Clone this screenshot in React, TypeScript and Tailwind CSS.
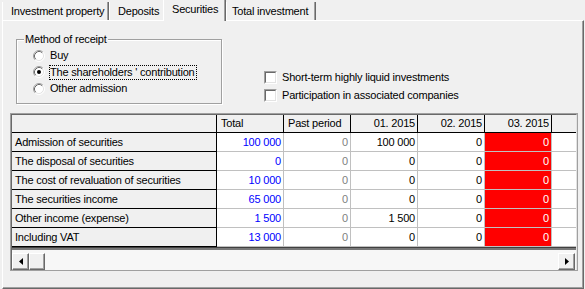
import React from "react";

const rows: string[][] = [
  ["Admission of securities", "100 000", "0", "100 000", "0", "0"],
  ["The disposal of securities", "0", "0", "0", "0", "0"],
  ["The cost of revaluation of securities", "10 000", "0", "0", "0", "0"],
  ["The securities income", "65 000", "0", "0", "0", "0"],
  ["Other income (expense)", "1 500", "0", "1 500", "0", "0"],
  ["Including VAT", "13 000", "0", "0", "0", "0"],
];

function Radio({ checked }: { checked?: boolean }) {
  return (
    <svg width="12" height="12" viewBox="0 0 12 12" className="shrink-0">
      <circle cx="6" cy="6" r="5" fill="#fff" />
      <path d="M2.11 9.89 A5.5 5.5 0 0 1 9.89 2.11" stroke="#a0a0a0" fill="none" />
      <path d="M9.89 2.11 A5.5 5.5 0 0 1 2.11 9.89" stroke="#ffffff" fill="none" />
      <path d="M2.82 9.18 A4.5 4.5 0 0 1 9.18 2.82" stroke="#696969" fill="none" />
      <path d="M9.18 2.82 A4.5 4.5 0 0 1 2.82 9.18" stroke="#e3e3e3" fill="none" />
      {checked && <circle cx="6" cy="6" r="2" fill="#000" />}
    </svg>
  );
}

function Check() {
  return (
    <div className="w-[13px] h-[13px] shrink-0 border border-t-[#a0a0a0] border-l-[#a0a0a0] border-r-white border-b-white">
      <div className="w-full h-full bg-white border border-t-[#696969] border-l-[#696969] border-r-[#e3e3e3] border-b-[#e3e3e3]" />
    </div>
  );
}

function ScrollBtn({ dir }: { dir: "l" | "r" }) {
  return (
    <div className="w-[17px] h-[17px] bg-[#f0f0f0] border border-t-white border-l-white border-r-[#696969] border-b-[#696969] shadow-[inset_-1px_-1px_0_#a0a0a0] flex items-center justify-center">
      <svg width="4" height="7" viewBox="0 0 4 7">
        {dir === "l" ? <path d="M4 0 L0 3.5 L4 7 Z" fill="#000" /> : <path d="M0 0 L4 3.5 L0 7 Z" fill="#000" />}
      </svg>
    </div>
  );
}

export default function App() {
  const valueColor = ["text-[#0000ff]", "text-[#808080]", "text-black", "text-black", "text-white"];
  return (
    <div className="w-[585px] h-[289px] bg-[#f0f0f0] overflow-hidden font-['Liberation_Sans',Arial,sans-serif] text-[11px] tracking-[-0.2px] text-black">
      {/* Tabs */}
      <div className="flex items-end h-[20px] pl-[2px]">
        <div className="w-[107px] h-[18px] border-l border-white border-r border-r-[#696969] shadow-[inset_-1px_0_0_#a0a0a0] pl-[8px] pt-[3px] leading-[13px]">
          Investment property
        </div>
        <div className="w-[54px] h-[18px] border-l border-white pl-[8px] pt-[3px] leading-[13px]">Deposits</div>
        <div className="relative z-10 -mb-[1px] w-[63px] h-[21px] bg-[#f0f0f0] border-l border-white border-r border-r-[#696969] shadow-[inset_-1px_0_0_#a0a0a0] pl-[8px] pt-[3px] leading-[13px]">
          Securities
        </div>
        <div className="w-[90px] h-[18px] border-l border-white border-r border-r-[#696969] shadow-[inset_-1px_0_0_#a0a0a0] pl-[5px] pt-[3px] leading-[13px]">
          Total investment
        </div>
      </div>

      {/* Panel */}
      <div className="ml-[2px] w-[582px] h-[269px] border-t border-l border-white border-r border-b border-r-[#696969] border-b-[#696969] shadow-[inset_-1px_-1px_0_#a0a0a0]">
        <div className="flex items-start">
          {/* Group box */}
          <div className="relative ml-[13px] mt-[18px] w-[206px] h-[65px] border border-[#a0a0a0] shadow-[inset_1px_1px_0_#fff,1px_1px_0_#fff]">
            <div className="absolute -top-[8px] left-[7px] px-[1px] bg-[#f0f0f0] leading-[14px]">Method of receipt</div>
            <div className="flex flex-col pt-[7.5px] pl-[16px]">
              {[
                ["Buy", false],
                ["The shareholders ' contribution", true],
                ["Other admission", false],
              ].map(([label, sel]) => (
                <div key={label as string} className="flex items-center gap-[4px] h-[16.5px]">
                  <Radio checked={sel as boolean} />
                  <span
                    className={`border leading-[13px] pr-[1px] ${sel ? "border-dotted border-black" : "border-transparent"}`}
                  >
                    {label as string}
                  </span>
                </div>
              ))}
            </div>
          </div>
          {/* Checkboxes */}
          <div className="ml-[42px] mt-[47px] flex flex-col">
            <div className="flex items-center gap-[5px] h-[18px]">
              <Check />
              <span>Short-term highly liquid investments</span>
            </div>
            <div className="flex items-center gap-[5px] h-[18px]">
              <Check />
              <span>Participation in associated companies</span>
            </div>
          </div>
        </div>

        {/* Grid */}
        <div className="ml-[7px] mt-[9px] w-[568px] h-[158px] border border-[#a0a0a0]">
          <div className="h-full border-t border-l border-r border-t-[#696969] border-l-[#696969] border-r-[#e3e3e3] flex flex-col">
            <div className="grid grid-cols-[205px_67px_67px_67px_67px_67px_24px] overflow-hidden">
              {/* header */}
              <div className="h-[18px] bg-[#f0f0f0] border-r border-b border-black" />
              <div className="h-[18px] bg-[#f0f0f0] border-r border-b border-black pl-[4px] leading-[17px]">Total</div>
              <div className="h-[18px] bg-[#f0f0f0] border-r border-b border-black pl-[4px] leading-[17px]">Past period</div>
              <div className="h-[18px] bg-[#f0f0f0] border-r border-b border-black pr-[2px] text-right leading-[17px]">01. 2015</div>
              <div className="h-[18px] bg-[#f0f0f0] border-r border-b border-black pr-[2px] text-right leading-[17px]">02. 2015</div>
              <div className="h-[18px] bg-[#f0f0f0] border-r border-b border-black pr-[2px] text-right leading-[17px]">03. 2015</div>
              <div className="h-[18px] bg-[#f0f0f0] border-b border-black" />
              {rows.map((r) => (
                <React.Fragment key={r[0]}>
                  <div className="h-[19px] bg-[#f0f0f0] border-r border-b border-black pl-[3px] leading-[18px] whitespace-nowrap">
                    {r[0]}
                  </div>
                  {r.slice(1).map((v, i) => (
                    <div
                      key={i}
                      className={`h-[19px] border-r border-b border-[#c0c0c0] pr-[2px] text-right leading-[18px] ${
                        i === 4 ? "bg-[#ff0000]" : "bg-white"
                      } ${valueColor[i]}`}
                    >
                      {v}
                    </div>
                  ))}
                  <div className="h-[19px] bg-white border-b border-[#c0c0c0]" />
                </React.Fragment>
              ))}
            </div>
            <div className="h-[3px] bg-[#787878] border-t border-[#404040]" />
            <div className="h-[20px] pt-[3px] pr-[1px] flex bg-[#f7f7f7]">
              <ScrollBtn dir="l" />
              <div className="w-[16px] h-[17px] bg-[#f0f0f0] border border-t-white border-l-white border-r-[#696969] border-b-[#696969] shadow-[inset_-1px_-1px_0_#a0a0a0]" />
              <div className="flex-1" />
              <ScrollBtn dir="r" />
            </div>
          </div>
        </div>
      </div>
    </div>
  );
}
